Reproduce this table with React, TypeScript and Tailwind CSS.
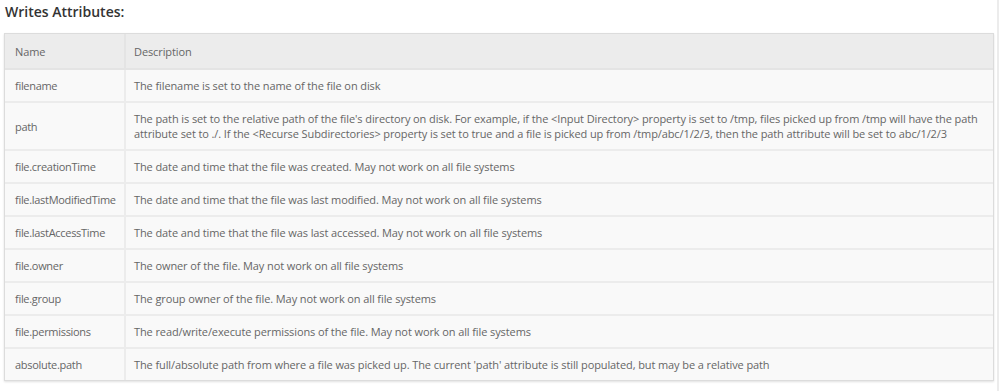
import React from 'react';

interface Attribute {
  name: string;
  description: string;
}

const attributes: Attribute[] = [
  { name: 'filename', description: 'The filename is set to the name of the file on disk' },
  {
    name: 'path',
    description:
      "The path is set to the relative path of the file's directory on disk. For example, if the <Input Directory> property is set to /tmp, files picked up from /tmp will have the path attribute set to ./. If the <Recurse Subdirectories> property is set to true and a file is picked up from /tmp/abc/1/2/3, then the path attribute will be set to abc/1/2/3",
  },
  { name: 'file.creationTime', description: 'The date and time that the file was created. May not work on all file systems' },
  { name: 'file.lastModifiedTime', description: 'The date and time that the file was last modified. May not work on all file systems' },
  { name: 'file.lastAccessTime', description: 'The date and time that the file was last accessed. May not work on all file systems' },
  { name: 'file.owner', description: 'The owner of the file. May not work on all file systems' },
  { name: 'file.group', description: 'The group owner of the file. May not work on all file systems' },
  { name: 'file.permissions', description: 'The read/write/execute permissions of the file. May not work on all file systems' },
  {
    name: 'absolute.path',
    description:
      "The full/absolute path from where a file was picked up. The current 'path' attribute is still populated, but may be a relative path",
  },
];

const App: React.FC = () => {
  return (
    <div className="w-[999px] h-[391px] bg-white font-['Open_Sans',sans-serif] text-[#666] border-r-2 border-[#ececec] overflow-hidden">
      <h3 className="pl-[5px] pt-[3px] h-[33px] text-[14px] font-semibold text-[#333] leading-[18px]">
        Writes Attributes:
      </h3>
      <div className="ml-[4px] mr-[3px] border border-[#dcdcdc] shadow-[0_1px_2px_rgba(0,0,0,0.12)]">
        <table className="w-full table-fixed border-collapse text-[11px] leading-[15px] tracking-[-0.1px]">
          <thead>
            <tr className="bg-[#ececec] h-[35px]">
              <th className="w-[120px] border-r-2 border-b-2 border-[#e4e4e4] text-left font-normal pl-[10px]">Name</th>
              <th className="border-b-2 border-[#e4e4e4] text-left font-normal px-[8px]">Description</th>
            </tr>
          </thead>
          <tbody>
            {attributes.map((attr, i) => (
              <tr key={attr.name} className="bg-[#f9f9f9]">
                <td
                  className={`border-r-2 ${i < attributes.length - 1 ? 'border-b-2' : ''} border-[#ececec] pl-[10px] pr-[2px] py-[8px] align-middle whitespace-nowrap overflow-hidden tracking-[-0.3px]`}
                >
                  {attr.name}
                </td>
                <td
                  className={`${i < attributes.length - 1 ? 'border-b-2' : ''} border-[#ececec] pl-[8px] pr-[6px] py-[8px] align-middle`}
                >
                  {attr.description}
                </td>
              </tr>
            ))}
          </tbody>
        </table>
      </div>
    </div>
  );
};

export default App;
